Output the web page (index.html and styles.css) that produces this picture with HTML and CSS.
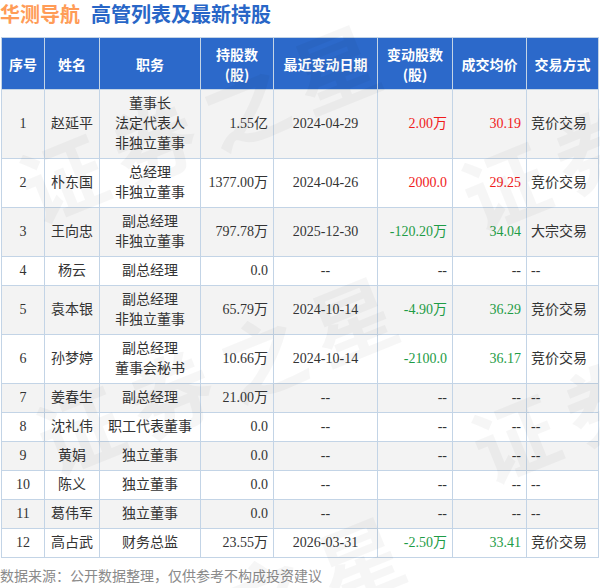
FILE: index.html
```html
<!DOCTYPE html>
<html lang="zh-CN">
<head>
<meta charset="utf-8">
<title>华测导航 高管列表及最新持股</title>
<link rel="stylesheet" href="styles.css">
</head>
<body>
<div class="page">
  <h1 class="title"><span class="company">华测导航</span><span class="subject">高管列表及最新持股</span></h1>
  <table class="grid">
    <colgroup>
      <col class="c1"><col class="c2"><col class="c3"><col class="c4"><col class="c5"><col class="c6"><col class="c7"><col class="c8">
    </colgroup>
    <thead>
      <tr>
        <th>序号</th><th>姓名</th><th>职务</th><th>持股数<br>(股)</th><th>最近变动日期</th><th>变动股数<br>(股)</th><th>成交均价</th><th>交易方式</th>
      </tr>
    </thead>
    <tbody>
      <tr class="odd"><td class="ctr">1</td><td class="ctr">赵延平</td><td class="ctr">董事长<br>法定代表人<br>非独立董事</td><td class="rt">1.55亿</td><td class="ctr">2024-04-29</td><td class="rt up">2.00万</td><td class="rt up">30.19</td><td class="lt">竞价交易</td></tr>
      <tr><td class="ctr">2</td><td class="ctr">朴东国</td><td class="ctr">总经理<br>非独立董事</td><td class="rt">1377.00万</td><td class="ctr">2024-04-26</td><td class="rt up">2000.0</td><td class="rt up">29.25</td><td class="lt">竞价交易</td></tr>
      <tr class="odd"><td class="ctr">3</td><td class="ctr">王向忠</td><td class="ctr">副总经理<br>非独立董事</td><td class="rt">797.78万</td><td class="ctr">2025-12-30</td><td class="rt down">-120.20万</td><td class="rt down">34.04</td><td class="lt">大宗交易</td></tr>
      <tr><td class="ctr">4</td><td class="ctr">杨云</td><td class="ctr">副总经理</td><td class="rt">0.0</td><td class="ctr">--</td><td class="rt">--</td><td class="rt">--</td><td class="lt">--</td></tr>
      <tr class="odd"><td class="ctr">5</td><td class="ctr">袁本银</td><td class="ctr">副总经理<br>非独立董事</td><td class="rt">65.79万</td><td class="ctr">2024-10-14</td><td class="rt down">-4.90万</td><td class="rt down">36.29</td><td class="lt">竞价交易</td></tr>
      <tr><td class="ctr">6</td><td class="ctr">孙梦婷</td><td class="ctr">副总经理<br>董事会秘书</td><td class="rt">10.66万</td><td class="ctr">2024-10-14</td><td class="rt down">-2100.0</td><td class="rt down">36.17</td><td class="lt">竞价交易</td></tr>
      <tr class="odd"><td class="ctr">7</td><td class="ctr">姜春生</td><td class="ctr">副总经理</td><td class="rt">21.00万</td><td class="ctr">--</td><td class="rt">--</td><td class="rt">--</td><td class="lt">--</td></tr>
      <tr><td class="ctr">8</td><td class="ctr">沈礼伟</td><td class="ctr">职工代表董事</td><td class="rt">0.0</td><td class="ctr">--</td><td class="rt">--</td><td class="rt">--</td><td class="lt">--</td></tr>
      <tr class="odd"><td class="ctr">9</td><td class="ctr">黄娟</td><td class="ctr">独立董事</td><td class="rt">0.0</td><td class="ctr">--</td><td class="rt">--</td><td class="rt">--</td><td class="lt">--</td></tr>
      <tr><td class="ctr">10</td><td class="ctr">陈义</td><td class="ctr">独立董事</td><td class="rt">0.0</td><td class="ctr">--</td><td class="rt">--</td><td class="rt">--</td><td class="lt">--</td></tr>
      <tr class="odd"><td class="ctr">11</td><td class="ctr">葛伟军</td><td class="ctr">独立董事</td><td class="rt">0.0</td><td class="ctr">--</td><td class="rt">--</td><td class="rt">--</td><td class="lt">--</td></tr>
      <tr><td class="ctr">12</td><td class="ctr">高占武</td><td class="ctr">财务总监</td><td class="rt">23.55万</td><td class="ctr">2026-03-31</td><td class="rt down">-2.50万</td><td class="rt down">33.41</td><td class="lt">竞价交易</td></tr>
    </tbody>
  </table>
  <p class="source">数据来源：公开数据整理，仅供参考不构成投资建议</p>
  <div class="watermark" aria-hidden="true">
    <span class="wm wm1">证券之星</span>
    <span class="wm wm2">证券之星</span>
    <span class="wm wm3">证券之星</span>
    <span class="wm wm4">证券之星</span>
    <span class="wm wm5">证券之星</span>
  </div>
</div>
</body>
</html>
```

FILE: styles.css
```css
html, body {
  margin: 0;
  padding: 0;
  background: #ffffff;
}

.page {
  position: relative;
  width: 600px;
  height: 588px;
  overflow: hidden;
  font-family: "Liberation Serif", "Noto Sans CJK SC", serif;
  color: #333333;
}

.title {
  margin: 0 0 9px 0;
  height: 28px;
  line-height: 28px;
  font-family: "Noto Sans CJK SC", sans-serif;
  font-size: 20px;
  font-weight: bold;
  white-space: nowrap;
}

.company {
  color: #ff9c57;
  margin-right: 11px;
}

.subject {
  color: #2866c7;
}

.grid {
  margin-left: 1px;
  width: 598px;
  table-layout: fixed;
  border-collapse: collapse;
  font-size: 14px;
  line-height: 20px;
}

.c1 { width: 43px; }
.c2 { width: 55px; }
.c3 { width: 101px; }
.c4 { width: 73px; }
.c5 { width: 104px; }
.c6 { width: 75px; }
.c7 { width: 74px; }
.c8 { width: 72px; }

.grid th,
.grid td {
  border: 1px solid #c3d4e6;
  padding: 4px 5px;
  vertical-align: middle;
  white-space: nowrap;
  overflow: hidden;
}

.grid th {
  background: #2c69ca;
  color: #ffffff;
  font-family: "Noto Sans CJK SC", sans-serif;
  font-weight: bold;
  text-align: center;
  padding: 6px 2px 5px;
}

.grid tbody tr {
  background: #ffffff;
}

.grid tbody tr.odd {
  background: #f3f3f3;
}

.ctr { text-align: center; }
.rt { text-align: right; }
.grid td.lt { text-align: left; padding-left: 4px; }

.up { color: #f01b1b; }
.down { color: #1e9c46; }

.source {
  margin: 7px 0 0 0;
  font-family: "Noto Sans CJK SC", sans-serif;
  font-size: 14px;
  line-height: 20px;
  color: #8a8a8a;
}

.watermark {
  position: absolute;
  left: 0;
  top: 0;
  width: 600px;
  height: 588px;
  pointer-events: none;
}

.wm {
  position: absolute;
  font-family: "Noto Sans CJK SC", sans-serif;
  font-weight: bold;
  font-size: 84px;
  line-height: 84px;
  letter-spacing: 14px;
  white-space: nowrap;
  color: rgba(0, 0, 0, 0.035);
  transform: translate(-50%, -50%) rotate(-22deg);
}

.wm1 { left: 205px; top: 118px; }
.wm2 { left: 222px; top: 370px; }
.wm3 { left: 647px; top: 126px; }
.wm4 { left: 657px; top: 378px; }
.wm5 { left: 229px; top: 610px; }
```
